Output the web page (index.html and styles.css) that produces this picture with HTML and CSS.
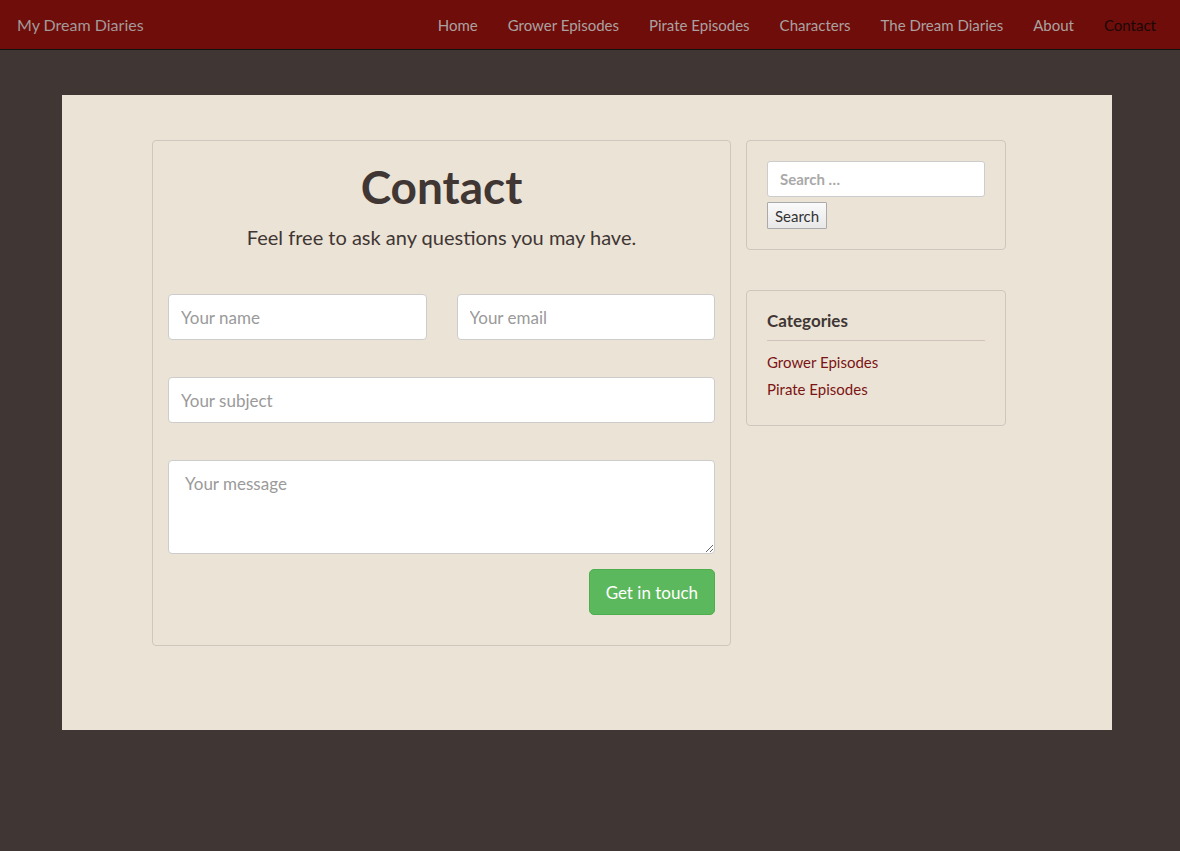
FILE: index.html
```html
<!DOCTYPE html>
<html>
<head>
<meta charset="utf-8">
<title>Contact – My Dream Diaries</title>
<link rel="stylesheet" href="styles.css">
</head>
<body>
<header class="navbar">
  <a class="brand" href="#">My Dream Diaries</a>
  <nav class="nav">
    <a href="#">Home</a>
    <a href="#">Grower Episodes</a>
    <a href="#">Pirate Episodes</a>
    <a href="#">Characters</a>
    <a href="#">The Dream Diaries</a>
    <a href="#">About</a>
    <a href="#" class="active">Contact</a>
  </nav>
</header>
<main class="page">
  <div class="columns">
    <section class="card contact">
      <h1 class="title">Contact</h1>
      <p class="lead">Feel free to ask any questions you may have.</p>
      <form class="form">
        <div class="row-2">
          <input class="field" type="text" placeholder="Your name">
          <input class="field" type="email" placeholder="Your email">
        </div>
        <input class="field" type="text" placeholder="Your subject">
        <textarea class="field message" placeholder="Your message"></textarea>
        <div class="actions">
          <button class="btn-send" type="button">Get in touch</button>
        </div>
      </form>
    </section>
    <aside class="sidebar">
      <div class="card widget search-widget">
        <input class="search-field" type="search" placeholder="Search …">
        <button class="search-btn" type="button">Search</button>
      </div>
      <div class="card widget cat-widget">
        <h3 class="widget-title">Categories</h3>
        <ul class="cat-list">
          <li><a href="#">Grower Episodes</a></li>
          <li><a href="#">Pirate Episodes</a></li>
        </ul>
      </div>
    </aside>
  </div>
</main>
</body>
</html>
```

FILE: styles.css
```css
* { box-sizing: border-box; }
html, body { margin: 0; padding: 0; }
body {
  background: #403634;
  font-family: "Lato", "Open Sans", sans-serif;
  color: #403634;
  min-height: 851px;
}
a { text-decoration: none; }

.navbar {
  height: 50px;
  background: #6f0d0b;
  border-bottom: 1px solid #111;
  display: flex;
  align-items: center;
  justify-content: space-between;
  padding: 0 9px 0 17px;
}
.brand {
  color: #a39a98;
  font-size: 16px;
}
.nav { display: flex; }
.nav a {
  color: #aba2a0;
  font-size: 15px;
  padding: 0 15px;
}
.nav a.active { color: #1a0806; }

.page {
  background: #ebe3d5;
  width: 1050px;
  margin: 45px 0 0 62px;
  padding: 45px 0 84px 90px;
}
.columns {
  display: flex;
  align-items: flex-start;
  gap: 15px;
}
.card {
  border: 1px solid #d1c6be;
  border-radius: 4px;
}
.contact {
  width: 579px;
  padding: 15px 15px 30px;
  text-align: center;
}
.title {
  margin: 0;
  font-size: 46px;
  font-weight: 700;
  line-height: 62px;
}
.lead {
  margin: 5px 0 43px;
  font-size: 20px;
  line-height: 28px;
}
.form {
  display: flex;
  flex-direction: column;
  gap: 37px;
}
.row-2 {
  display: flex;
  gap: 30px;
}
.row-2 .field { flex: 1; min-width: 0; }
.field {
  height: 46px;
  background: #fff;
  border: 1px solid #ccc;
  border-radius: 4px;
  padding: 0 12px;
  font-family: inherit;
  font-size: 17px;
  color: #555;
  width: 100%;
}
.field::placeholder { color: #9a9a9a; }
.message {
  height: 94px;
  padding: 12px 16px;
  resize: vertical;
}
.actions {
  display: flex;
  justify-content: flex-end;
  margin-top: -22px;
}
.btn-send {
  height: 46px;
  padding: 0 16px;
  background: #5cb85c;
  border: 1px solid #4cae4c;
  border-radius: 5px;
  color: #fff;
  font-family: inherit;
  font-size: 17px;
}

.sidebar {
  width: 260px;
  display: flex;
  flex-direction: column;
  gap: 40px;
}
.widget { padding: 20px; }
.search-field {
  display: block;
  width: 218px;
  height: 36px;
  border: 1px solid #ccc;
  border-radius: 3px;
  background: #fff;
  padding: 0 12px;
  font-family: inherit;
  font-size: 15px;
  font-weight: 700;
}
.search-field::placeholder { color: #a9a9a9; font-weight: 700; }
.search-btn {
  display: block;
  margin-top: 5px;
  height: 27px;
  padding: 0 7px;
  background: linear-gradient(#fafafa, #e8e8e8);
  border: 1px solid #aaa;
  border-radius: 1px;
  font-family: inherit;
  font-size: 15px;
  color: #333;
}
.cat-widget { padding: 18px 20px 22px; }
.widget-title {
  margin: 0;
  font-size: 17px;
  font-weight: 700;
  line-height: 24px;
  padding-bottom: 7px;
  border-bottom: 1px solid #d1c3bb;
}
.cat-list {
  list-style: none;
  margin: 8px 0 0;
  padding: 0;
}
.cat-list li { line-height: 27px; font-size: 15px; }
.cat-list a { color: #7b1414; }
```
